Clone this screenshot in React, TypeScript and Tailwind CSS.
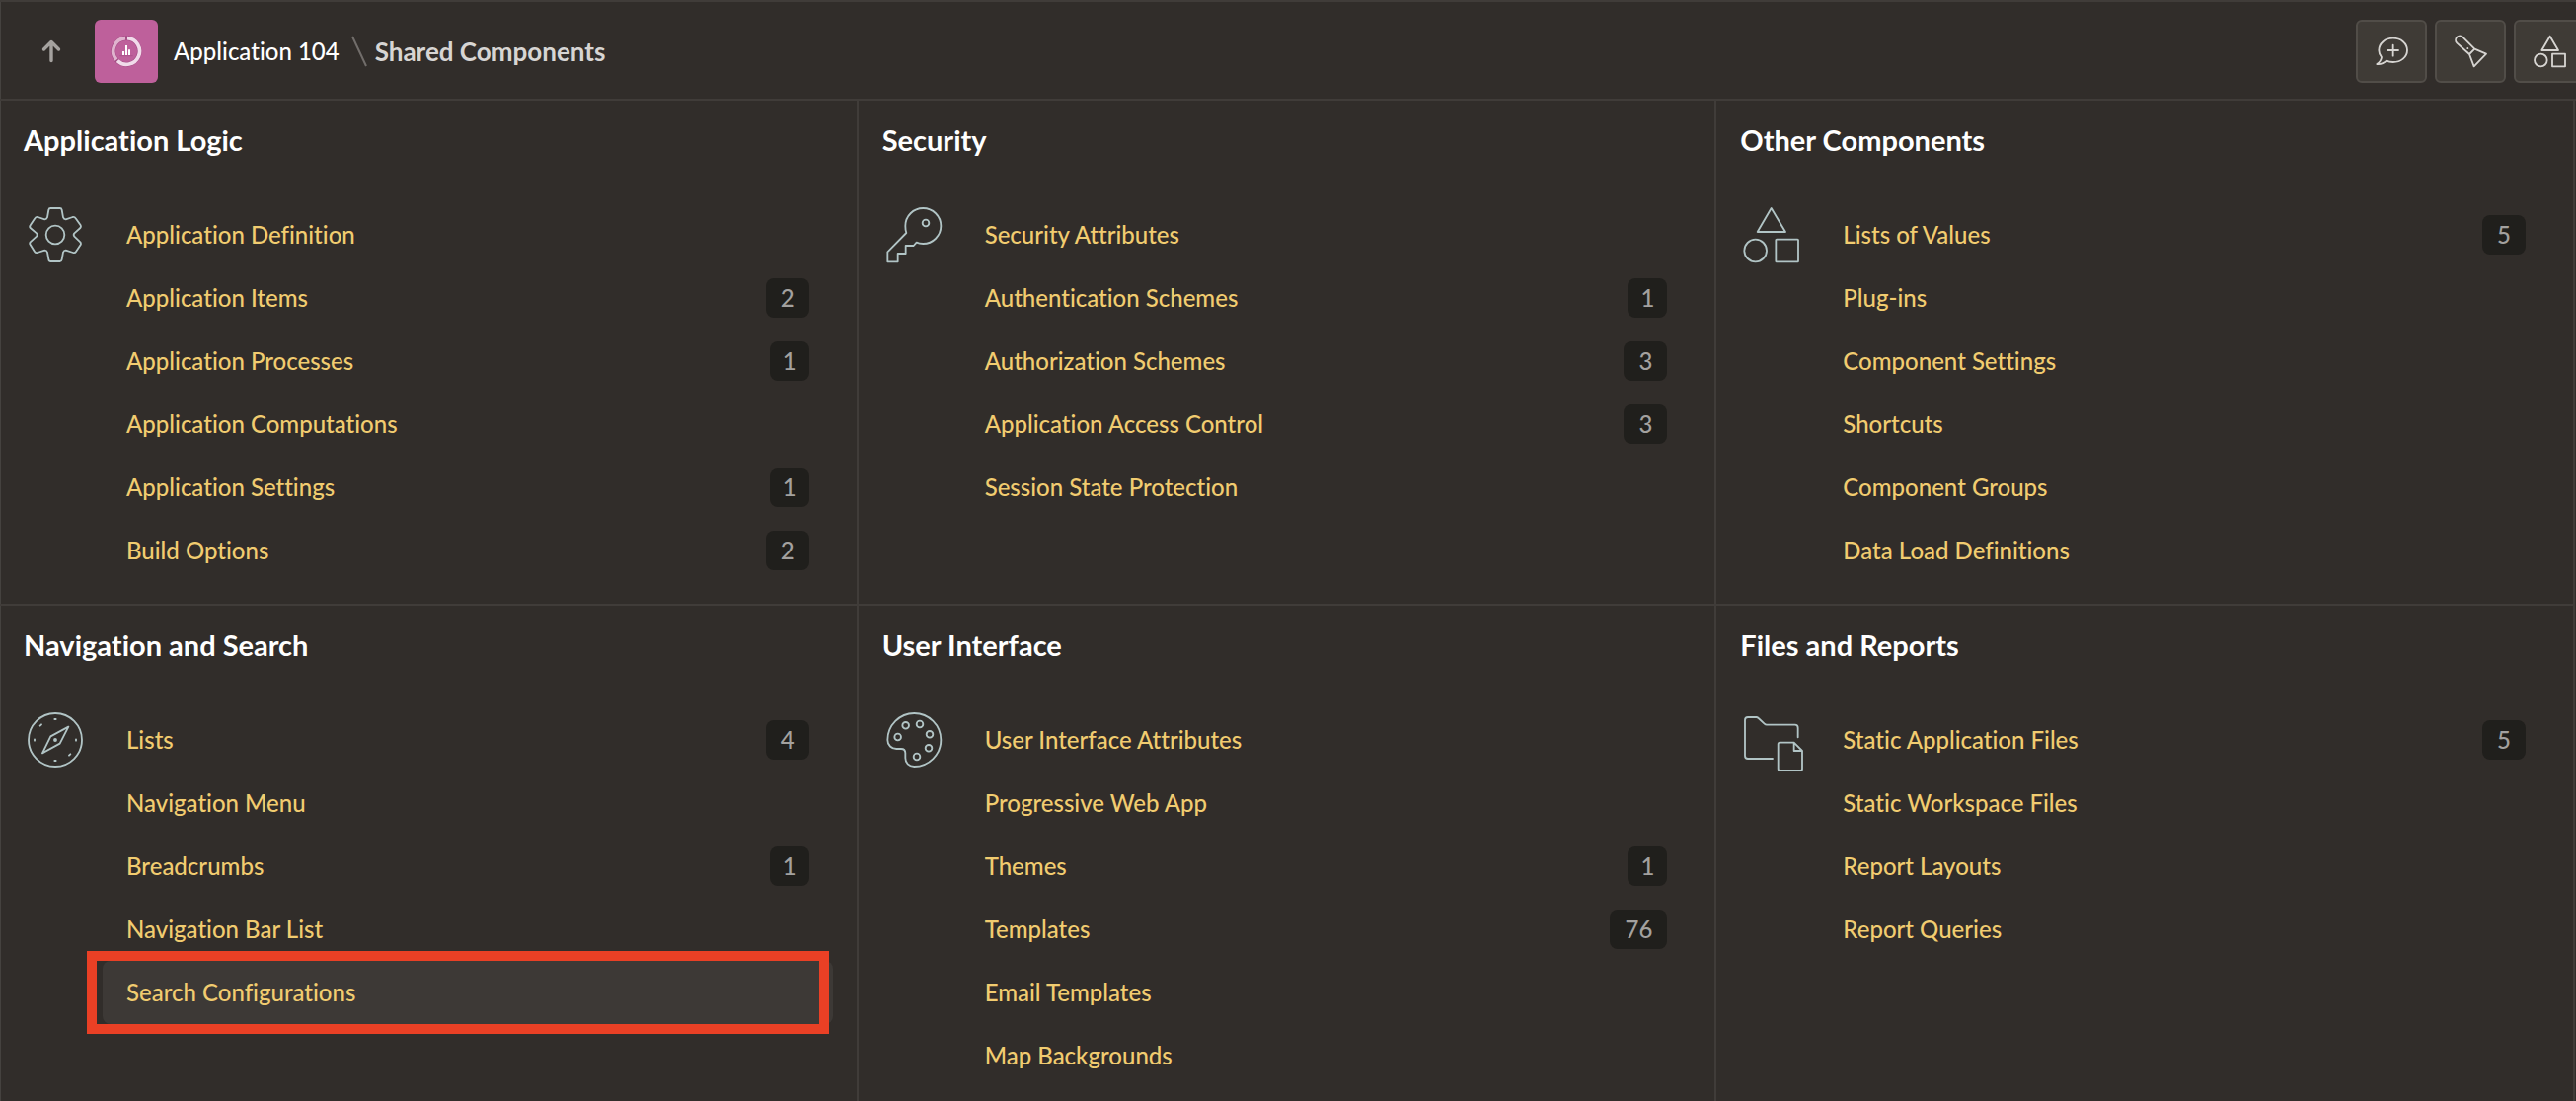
import type { ReactNode } from "react";
import clsx from "clsx";

type Item = { label: string; count?: number; highlighted?: boolean };
type Group = { title: string; icon: ReactNode; items: Item[] };

function SectionIcon({ viewBox, children }: { viewBox: string; children: ReactNode }) {
  return (
    <svg
      viewBox={viewBox}
      className="size-16 shrink-0"
      fill="none"
      stroke="#b1c4c5"
      strokeWidth={5.5}
      strokeLinejoin="round"
      strokeLinecap="round"
      aria-hidden="true"
    >
      {children}
    </svg>
  );
}

const GearIcon = (
  <SectionIcon viewBox="72 48 192 192">
    <path d="M154 63 H182 Q187 63 188 68 L192 91 Q194 97 200 97 L221 90 Q227 89 230 94 L245 115 Q247 119 244 123 L226 139 Q222 144 226 149 L244 166 Q247 170 245 174 L231 195 Q228 200 222 198 L200 191 Q194 191 192 197 L188 219 Q187 225 182 225 H154 Q149 225 148 219 L144 197 Q142 191 136 191 L114 198 Q108 200 105 195 L92 174 Q89 170 92 166 L111 149 Q115 144 111 139 L92 123 Q89 119 92 115 L106 94 Q109 89 115 90 L136 97 Q142 97 144 91 L148 68 Q149 63 154 63Z" />
    <circle cx="168" cy="144" r="28" />
  </SectionIcon>
);

const KeyIcon = (
  <SectionIcon viewBox="39 48 192 192">
    <path d="M112 138 C109 130 109 124 109 117 A54 54 0 1 1 163 171 C156 171 149 170 143 167 L134 177 H110 V201 H86 V226 H55 V196 Z" />
    <circle cx="171" cy="108" r="10" />
  </SectionIcon>
);

const ShapesIcon = (
  <SectionIcon viewBox="69 48 192 192">
    <path d="M164 63 L122 135 H207 Z" />
    <circle cx="116" cy="192" r="34" />
    <rect x="178" y="158" width="68" height="68" rx="2" />
  </SectionIcon>
);

const CompassIcon = (
  <SectionIcon viewBox="72 54 192 192">
    <circle cx="168" cy="150" r="81" />
    <path d="M208 110 L154 139 L129 190 L182 161 Z" />
    <circle cx="168" cy="150" r="3" />
    <path d="M166 87 H170 M166 213 H170 M105 148 V152 M231 148 V152 M122 107 L126 103 M210 197 L214 193" />
  </SectionIcon>
);

const PaletteIcon = (
  <SectionIcon viewBox="39 54 192 192">
    <path d="M136 69 A81 81 0 0 1 136 231 C119 231 109 219 109 205 V190 Q109 177 96 177 H82 C67 177 55 166 55 150 A81 81 0 0 1 136 69 Z" />
    <circle cx="86" cy="141" r="10" />
    <circle cx="110" cy="106" r="10" />
    <circle cx="153" cy="102" r="10" />
    <circle cx="183" cy="133" r="10" />
    <circle cx="180" cy="175" r="10" />
    <circle cx="144" cy="201" r="10" />
  </SectionIcon>
);

const FilesIcon = (
  <SectionIcon viewBox="69 54 192 192">
    <path d="M168 207 H93 Q84 207 84 198 V90 Q84 81 93 81 H118 Q122 81 125 84 L143 101 Q146 104 150 104 H236 Q245 104 245 113 V142" />
    <path d="M233 158 H190 Q185 158 185 163 V238 Q185 243 190 243 H253 Q258 243 258 238 V183 L233 158 V183 H258" />
  </SectionIcon>
);

const groups: Group[] = [
  {
    title: "Application Logic",
    icon: GearIcon,
    items: [
      { label: "Application Definition" },
      { label: "Application Items", count: 2 },
      { label: "Application Processes", count: 1 },
      { label: "Application Computations" },
      { label: "Application Settings", count: 1 },
      { label: "Build Options", count: 2 },
    ],
  },
  {
    title: "Security",
    icon: KeyIcon,
    items: [
      { label: "Security Attributes" },
      { label: "Authentication Schemes", count: 1 },
      { label: "Authorization Schemes", count: 3 },
      { label: "Application Access Control", count: 3 },
      { label: "Session State Protection" },
    ],
  },
  {
    title: "Other Components",
    icon: ShapesIcon,
    items: [
      { label: "Lists of Values", count: 5 },
      { label: "Plug-ins" },
      { label: "Component Settings" },
      { label: "Shortcuts" },
      { label: "Component Groups" },
      { label: "Data Load Definitions" },
    ],
  },
  {
    title: "Navigation and Search",
    icon: CompassIcon,
    items: [
      { label: "Lists", count: 4 },
      { label: "Navigation Menu" },
      { label: "Breadcrumbs", count: 1 },
      { label: "Navigation Bar List" },
      { label: "Search Configurations", highlighted: true },
    ],
  },
  {
    title: "User Interface",
    icon: PaletteIcon,
    items: [
      { label: "User Interface Attributes" },
      { label: "Progressive Web App" },
      { label: "Themes", count: 1 },
      { label: "Templates", count: 76 },
      { label: "Email Templates" },
      { label: "Map Backgrounds" },
    ],
  },
  {
    title: "Files and Reports",
    icon: FilesIcon,
    items: [
      { label: "Static Application Files", count: 5 },
      { label: "Static Workspace Files" },
      { label: "Report Layouts" },
      { label: "Report Queries" },
    ],
  },
];

function Row({ item }: { item: Item }) {
  return (
    <li className="relative">
      <a
        href="#"
        className={clsx(
          "flex h-16 items-center justify-between rounded-lg px-6 font-medium text-[#f1cc70]",
          item.highlighted && "bg-[#3d3936]",
        )}
      >
        <span>{item.label}</span>
        {item.count !== undefined && (
          <span
            className={clsx(
              "flex h-10 items-center rounded-lg bg-[#201f1c] text-[#a3a19f]",
              item.count === 1 ? "px-[13px]" : "px-[15px]",
            )}
          >
            {item.count}
          </span>
        )}
      </a>
      {item.highlighted && (
        <div className="pointer-events-none absolute -inset-y-2.5 -left-4 right-1 border-10 border-[#ea4025]" />
      )}
    </li>
  );
}

function ToolButton({ label, viewBox, children }: { label: string; viewBox: string; children: ReactNode }) {
  return (
    <button
      type="button"
      aria-label={label}
      className="flex h-16 w-18 shrink-0 items-center justify-center rounded-md border-2 border-[#514d48] bg-[#3f3b36]"
    >
      <svg
        viewBox={viewBox}
        className="size-8 overflow-visible"
        fill="none"
        stroke="#d6d4d1"
        strokeWidth={5.5}
        strokeLinejoin="round"
        strokeLinecap="round"
        aria-hidden="true"
      >
        {children}
      </svg>
    </button>
  );
}

function AppIcon() {
  return (
    <span className="flex size-16 items-center justify-center rounded-md bg-[#be609b]">
      <svg viewBox="246 78 96 96" className="size-8" fill="none" aria-hidden="true">
        <circle cx="294" cy="126" r="40" stroke="#a34c84" strokeWidth="14" />
        <path d="M297 86 A40 40 0 1 1 267 155" stroke="#f1dbea" strokeWidth="11" />
        <path d="M264 152 A40 40 0 0 1 291 86" stroke="#e0b3ce" strokeWidth="11" />
        <path d="M285 138 V126 M294 138 V108 M303 138 V121" stroke="#ffffff" strokeWidth="6" />
        <path d="M274 140 H314" stroke="#a34c84" strokeWidth="2" />
      </svg>
    </span>
  );
}

export default function App() {
  return (
    <div className="flex min-h-screen flex-col overflow-hidden bg-[#312d2a] font-['Lato','Noto_Sans',sans-serif] text-2xl shadow-[inset_1px_0_0_#45423f] [font-variant-ligatures:none]">
      <header className="flex items-center justify-between overflow-hidden border-y-2 border-[#403c39] pt-[18px] pb-4 pl-9">
        <nav aria-label="Breadcrumb" className="flex items-center">
          <a href="#" aria-label="Up">
            <svg
              viewBox="0 0 32 32"
              className="size-8"
              fill="none"
              stroke="#a5a29f"
              strokeWidth="3.4"
              strokeLinecap="round"
              strokeLinejoin="round"
              aria-hidden="true"
            >
              <path d="M16 25.5 V7 M8.5 14 L16 6.5 L23.5 14" />
            </svg>
          </a>
          <a href="#" className="ml-7 flex items-center gap-4 font-medium text-white">
            <AppIcon />
            Application 104
          </a>
          <svg viewBox="0 0 16 32" className="mr-2 ml-3 h-8 w-4" stroke="#716d6a" strokeWidth="2" aria-hidden="true">
            <path d="M1 1 L15 31" />
          </svg>
          <span className="text-[26px] leading-8 font-bold text-[#d7d5d3]" aria-current="page">
            Shared Components
          </span>
        </nav>
        <div className="-mr-[9px] flex gap-2">
          <ToolButton label="Feedback" viewBox="171 108 96 96">
            <path d="M189 174 C184 168 181 161 181 153 C181 132 200 116 224 116 S267 132 267 153 S248 189 224 189 C217 189 210 188 204 185 C196 193 186 196 175 195 C183 190 188 183 189 174 Z" />
            <path d="M224 137 V170 M207 153 H240" />
          </ToolButton>
          <ToolButton label="Utilities" viewBox="411 108 96 96">
            <path d="M456 165 L418 131 A12 12 0 0 1 436 113 L472 149 L507 164 L470 202 Z L472 149" />
            <path d="M451 147 V147.5" />
          </ToolButton>
          <ToolButton label="Shared Components" viewBox="651 108 96 96">
            <path d="M701 110 L676 153 H726 Z" />
            <circle cx="673" cy="183" r="19" />
            <rect x="708" y="164" width="39" height="38" />
          </ToolButton>
        </div>
      </header>
      <main className="mr-px grid grow grid-cols-3 grid-rows-[auto_1fr]">
        {groups.map((group, index) => (
          <section
            key={group.title}
            className={clsx(
              "border-r-2 border-[#403c39] px-6 pt-6",
              index < 3 ? "border-b-2 pb-[22px]" : "pb-3",
            )}
          >
            <h2 className="text-[29px] leading-8 font-bold text-white">{group.title}</h2>
            <div className="mt-12 flex gap-4">
              {group.icon}
              <ul className="grow">
                {group.items.map((item) => (
                  <Row key={item.label} item={item} />
                ))}
              </ul>
            </div>
          </section>
        ))}
      </main>
    </div>
  );
}
